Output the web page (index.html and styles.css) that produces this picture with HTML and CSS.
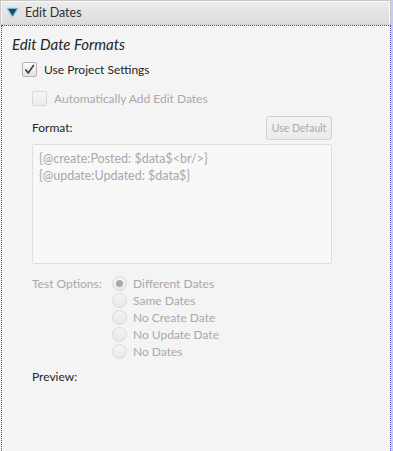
FILE: index.html
```html
<!DOCTYPE html>
<html lang="en">
<head>
  <meta charset="UTF-8" />
  <title>Edit Dates</title>
  <link rel="stylesheet" href="styles.css">
</head>
<body>
  <div class="titled-pane">
    <div class="title">
      <svg class="arrow" width="11" height="9" viewBox="0 0 11 9"><path d="M0.5 0.5 H10.5 L5.5 8.5 Z" fill="#27495a" stroke="#6fc2e8" stroke-width="0.8" /></svg>
      <span>Edit Dates</span>
    </div>
    <div class="content">
      <div class="heading">Edit Date Formats</div>
      <div class="check-row">
        <span class="box">
          <svg width="11" height="11" viewBox="0 0 11 11"><path d="M1.5 5.5 L4.2 9 L9.8 1" fill="none" stroke="#3a3a3a" stroke-width="1.6" /></svg>
        </span>
        <span>Use Project Settings</span>
      </div>
      <div class="inner">
        <div class="check-row disabled">
          <span class="box"></span>
          <span>Automatically Add Edit Dates</span>
        </div>
        <div class="format-row">
          <span class="label">Format:</span>
          <button class="btn" disabled>Use Default</button>
        </div>
        <div class="textarea">
          <div>{@create:Posted: $data$&lt;br/&gt;}</div>
          <div>{@update:Updated: $data$}</div>
        </div>
        <div class="test-row">
          <span class="label muted">Test Options:</span>
          <div class="radios">
            <div class="radio-row"><span class="radio on"></span>Different Dates</div>
            <div class="radio-row"><span class="radio"></span>Same Dates</div>
            <div class="radio-row"><span class="radio"></span>No Create Date</div>
            <div class="radio-row"><span class="radio"></span>No Update Date</div>
            <div class="radio-row"><span class="radio"></span>No Dates</div>
          </div>
        </div>
        <div class="label preview">Preview:</div>
      </div>
    </div>
  </div>
</body>
</html>
```

FILE: styles.css
```css
* { box-sizing: border-box; }
body {
  margin: 0;
  background: #c9c9f6;
  font-family: "Segoe UI", Lato, "Open Sans", sans-serif;
  font-size: 12px;
  color: #262626;
  height: 451px;
  overflow: hidden;
}
.titled-pane { width: 391px; height: 451px; background: #f4f4f4; display: flex; flex-direction: column; }
.title {
  height: 25px;
  border: 1px solid #c8c8c8;
  border-bottom-color: #d2d2d2;
  box-shadow: inset 0 1px 0 #fafafa, inset 1px 0 0 #f6f6f6, inset -1px 0 0 #f6f6f6;
  background: linear-gradient(#ececec, #dcdcdc);
  display: flex; align-items: center;
  padding-left: 6px;
  font-size: 12.5px;
  color: #303030;
}
.arrow { margin-right: 7px; filter: drop-shadow(0 0 1px #7fd0f5); }
.content {
  flex: 1;
  margin-left: 1px;
  border: 1px dotted #4848c8;
  border-bottom: none;
  padding: 9px 0 0 10px;
}
.heading { font-style: italic; font-size: 15px; color: #262626; line-height: 18px; }
.check-row { display: flex; align-items: center; gap: 7px; margin: 8px 0 0 10px; height: 17px; }
.box {
  width: 15px; height: 15px;
  border: 1px solid #b5b5b5; border-radius: 2px;
  background: linear-gradient(#fafafa, #e2e2e2);
  display: flex; align-items: center; justify-content: center;
}
.inner { margin-left: 20px; }
.check-row.disabled { margin: 12px 0 0 0; color: #a9a9a9; }
.check-row.disabled .box { border-color: #d8d8d8; background: linear-gradient(#f6f6f6, #ececec); }
.format-row { display: flex; justify-content: space-between; align-items: center; width: 300px; margin-top: 8px; height: 25px; }
.label { color: #262626; }
.btn {
  width: 66px; height: 24px;
  border: 1px solid #d2d2d2; border-radius: 3px;
  background: linear-gradient(#f3f3f3, #ebebeb);
  font-family: inherit; font-size: 10.5px; color: #aaaaaa;
  padding: 0;
}
.textarea {
  width: 300px; height: 120px;
  margin-top: 4px;
  border: 1px solid #dedede; border-radius: 2px;
  background: #f8f8f8;
  padding: 5px 6px;
  color: #a8a8a8;
  font-size: 12.5px;
  line-height: 17px;
}
.test-row { display: flex; margin-top: 11px; }
.muted { color: #a9a9a9; width: 80px; line-height: 17px; }
.radios { display: flex; flex-direction: column; color: #a9a9a9; }
.radio-row { display: flex; align-items: center; gap: 6px; height: 17px; }
.radio {
  width: 15px; height: 15px; border-radius: 50%;
  border: 1px solid #dadada;
  background: linear-gradient(#f4f4f4, #e8e8e8);
  display: flex; align-items: center; justify-content: center;
}
.radio.on::after { content: ""; width: 7px; height: 7px; border-radius: 50%; background: #a9a9a9; }
.preview { margin-top: 9px; }
```
